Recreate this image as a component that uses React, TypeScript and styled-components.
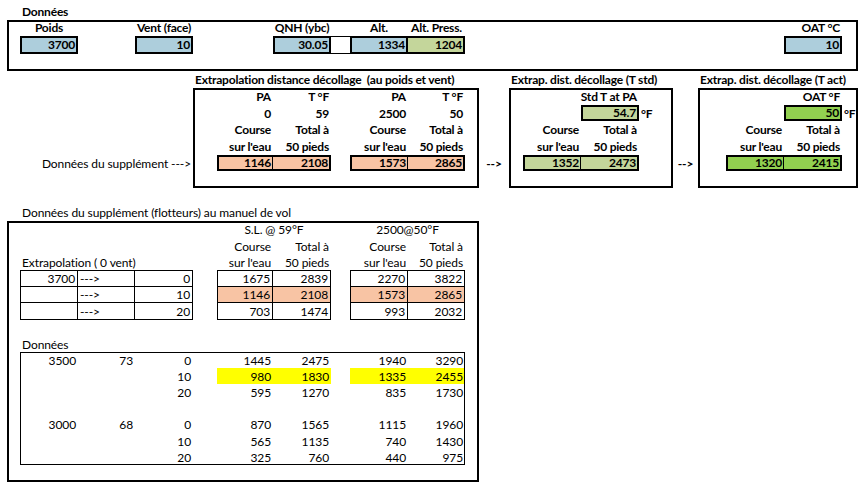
import React from "react";
import styled, { createGlobalStyle } from "styled-components";

const GlobalStyle = createGlobalStyle`
  html, body { margin: 0; padding: 0; background: #fff; }
  body { font-family: Lato, "Liberation Sans", sans-serif; color: #000; }
`;

// Excel-like column widths A..V and row heights 1..29
const COLS = [7, 13, 58, 57, 58, 24, 56, 58, 19, 58, 57, 14, 30, 14, 58, 58, 34, 25, 28, 58, 58, 16];
const ROWS = [16.5, 16.5, 18, 17, 17, 17, 16, 17, 17, 16, 17, 16, 17, 17, 16, 16, 17, 16, 17, 16, 16, 16, 16, 16, 16, 17, 16, 16, 17];

const col = (letter: string) => letter.charCodeAt(0) - 64;

const BLUE = "#adcedc";
const OLIVE = "#c4d69b";
const GREEN = "#92d050";
const SALMON = "#f8c4a4";
const YELLOW = "#ffff00";

type Align = "left" | "center" | "right";

const Sheet = styled.div`
  display: grid;
  grid-template-columns: ${COLS.map((c) => `${c}px`).join(" ")};
  grid-template-rows: ${ROWS.map((r) => `${r}px`).join(" ")};
  padding-top: 3px;
  width: 864px;
  height: 490px;
  box-sizing: border-box;
  font-size: 12px;
  line-height: 1;
`;

interface Place {
  $c: number;
  $r: number;
  $span?: number;
}

const Frame = styled.div<{ $c1: number; $c2: number; $r1: number; $r2: number; $thin?: boolean }>`
  grid-column: ${(p) => p.$c1} / ${(p) => p.$c2 + 1};
  grid-row: ${(p) => p.$r1} / ${(p) => p.$r2 + 1};
  border: ${(p) => (p.$thin ? "1px" : "2px")} solid #000;
  pointer-events: none;
  z-index: 2;
`;

const Cell = styled.div<Place & { $align?: Align; $bold?: boolean }>`
  grid-column: ${(p) => p.$c} / span ${(p) => p.$span ?? 1};
  grid-row: ${(p) => p.$r};
  display: flex;
  align-items: center;
  justify-content: ${(p) =>
    p.$align === "right" ? "flex-end" : p.$align === "center" ? "center" : "flex-start"};
  padding: 1px 2px 0;
  font-weight: ${(p) => (p.$bold ? 700 : 400)};
  letter-spacing: ${(p) => (p.$bold ? "-0.2px" : "-0.1px")};
  white-space: nowrap;
  min-width: 0;
`;

const Field = styled(Cell)<{ $fill: string; $pos?: "single" | "first" | "last" }>`
  background: ${(p) => p.$fill};
  border: 2px solid #000;
  border-right-width: ${(p) => (p.$pos === "first" ? "1px" : "2px")};
  border-left-width: ${(p) => (p.$pos === "last" ? "0" : "2px")};
  padding: 0 1px 0 2px;
  z-index: 1;
`;

const Spacer = styled.div<Place>`
  grid-column: ${(p) => p.$c} / span ${(p) => p.$span ?? 1};
  grid-row: ${(p) => p.$r};
  border-top: 1px solid #000;
  border-bottom: 1px solid #000;
`;

const TableCell = styled(Cell)<{ $fill?: string; $top?: boolean; $left?: boolean }>`
  background: ${(p) => p.$fill ?? "transparent"};
  border-right: 1px solid #000;
  border-bottom: 1px solid #000;
  border-top: ${(p) => (p.$top ? "1px solid #000" : "0")};
  border-left: ${(p) => (p.$left ? "1px solid #000" : "0")};
`;

const Highlight = styled.div<Place>`
  grid-column: ${(p) => p.$c} / span ${(p) => p.$span ?? 1};
  grid-row: ${(p) => p.$r};
  background: ${YELLOW};
`;

const pairs: { c: string; r: number; fill: string; a: string; b: string }[] = [
  { c: "G", r: 10, fill: SALMON, a: "1146", b: "2108" },
  { c: "J", r: 10, fill: SALMON, a: "1573", b: "2865" },
  { c: "O", r: 10, fill: OLIVE, a: "1352", b: "2473" },
  { c: "T", r: 10, fill: GREEN, a: "1320", b: "2415" },
];

const headRows: { r: number; cells: [string, string][] ; bold: boolean }[] = [
  { r: 6, bold: true, cells: [["G", "PA"], ["H", "T °F"], ["J", "PA"], ["K", "T °F"]] },
  { r: 7, bold: true, cells: [["G", "0"], ["H", "59"], ["J", "2500"], ["K", "50"]] },
  {
    r: 8,
    bold: true,
    cells: [["G", "Course"], ["H", "Total à"], ["J", "Course"], ["K", "Total à"], ["O", "Course"], ["P", "Total à"], ["T", "Course"], ["U", "Total à"]],
  },
  {
    r: 9,
    bold: true,
    cells: [["G", "sur l'eau"], ["H", "50 pieds"], ["J", "sur l'eau"], ["K", "50 pieds"], ["O", "sur l'eau"], ["P", "50 pieds"], ["T", "sur l'eau"], ["U", "50 pieds"]],
  },
  { r: 15, bold: false, cells: [["G", "Course"], ["H", "Total à"], ["J", "Course"], ["K", "Total à"]] },
  { r: 16, bold: false, cells: [["G", "sur l'eau"], ["H", "50 pieds"], ["J", "sur l'eau"], ["K", "50 pieds"]] },
];

const extrap = [
  { w: "3700", v: "0", sl: ["1675", "2839"], hi: ["2270", "3822"], fill: undefined as string | undefined },
  { w: "", v: "10", sl: ["1146", "2108"], hi: ["1573", "2865"], fill: SALMON },
  { w: "", v: "20", sl: ["703", "1474"], hi: ["993", "2032"], fill: undefined },
];

const data: { r: number; vals: string[] }[] = [
  { r: 22, vals: ["3500", "73", "0", "1445", "2475", "1940", "3290"] },
  { r: 23, vals: ["", "", "10", "980", "1830", "1335", "2455"] },
  { r: 24, vals: ["", "", "20", "595", "1270", "835", "1730"] },
  { r: 26, vals: ["3000", "68", "0", "870", "1565", "1115", "1960"] },
  { r: 27, vals: ["", "", "10", "565", "1135", "740", "1430"] },
  { r: 28, vals: ["", "", "20", "325", "760", "440", "975"] },
];
const dataCols = ["C", "D", "E", "G", "H", "J", "K"];

export default function App() {
  return (
    <>
      <GlobalStyle />
      <Sheet>
        {/* Frames */}
        <Frame $c1={col("B")} $c2={col("V")} $r1={2} $r2={4} />
        <Frame $c1={col("F")} $c2={col("L")} $r1={6} $r2={11} />
        <Frame $c1={col("N")} $c2={col("Q")} $r1={6} $r2={11} />
        <Frame $c1={col("S")} $c2={col("V")} $r1={6} $r2={11} />
        <Frame $c1={col("B")} $c2={col("L")} $r1={14} $r2={29} />
        <Frame $thin $c1={col("C")} $c2={col("K")} $r1={22} $r2={28} />

        {/* Section 1: Données */}
        <Cell $c={col("C")} $r={1} $span={2} $bold>Données</Cell>
        <Cell $c={col("C")} $r={2} $align="center" $bold>Poids</Cell>
        <Cell $c={col("E")} $r={2} $align="center" $bold>Vent (face)</Cell>
        <Cell $c={col("H")} $r={2} $align="center" $bold>QNH (ybc)</Cell>
        <Cell $c={col("J")} $r={2} $align="center" $bold>Alt.</Cell>
        <Cell $c={col("K")} $r={2} $align="center" $bold>Alt. Press.</Cell>
        <Cell $c={col("U")} $r={2} $align="right" $bold>OAT °C</Cell>

        <Field $c={col("C")} $r={3} $fill={BLUE} $align="right" $bold>3700</Field>
        <Field $c={col("E")} $r={3} $fill={BLUE} $align="right" $bold>10</Field>
        <Field $c={col("H")} $r={3} $fill={BLUE} $align="right" $bold>30.05</Field>
        <Spacer $c={col("I")} $r={3} />
        <Field $c={col("J")} $r={3} $fill={BLUE} $align="right" $bold>1334</Field>
        <Field $c={col("K")} $r={3} $fill={OLIVE} $pos="last" $align="right" $bold>1204</Field>
        <Field $c={col("U")} $r={3} $fill={BLUE} $align="right" $bold>10</Field>

        {/* Section 2-4: extrapolation */}
        <Cell $c={col("F")} $r={5} $span={7} $bold>Extrapolation distance décollage&nbsp; (au poids et vent)</Cell>
        <Cell $c={col("N")} $r={5} $span={5} $bold>Extrap. dist. décollage (T std)</Cell>
        <Cell $c={col("S")} $r={5} $span={4} $bold>Extrap. dist. décollage (T act)</Cell>

        {headRows.map((row) =>
          row.cells.map(([c, t]) => (
            <Cell key={`${row.r}${c}`} $c={col(c)} $r={row.r} $align="right" $bold={row.bold}>
              {t}
            </Cell>
          ))
        )}

        <Cell $c={col("O")} $r={6} $span={2} $align="right" $bold>Std T at PA</Cell>
        <Field $c={col("P")} $r={7} $fill={OLIVE} $align="right" $bold>54.7</Field>
        <Cell $c={col("Q")} $r={7} $bold>°F</Cell>
        <Cell $c={col("U")} $r={6} $align="right" $bold>OAT °F</Cell>
        <Field $c={col("U")} $r={7} $fill={GREEN} $align="right" $bold>50</Field>
        <Cell $c={col("V")} $r={7} $bold>°F</Cell>

        <Cell $c={col("B")} $r={10} $span={4} $align="right">Données du supplément ---&gt;</Cell>
        {pairs.map((p) => (
          <React.Fragment key={p.c}>
            <Field $c={col(p.c)} $r={p.r} $fill={p.fill} $pos="first" $align="right" $bold>{p.a}</Field>
            <Field $c={col(p.c) + 1} $r={p.r} $fill={p.fill} $pos="last" $align="right" $bold>{p.b}</Field>
          </React.Fragment>
        ))}
        <Cell $c={col("M")} $r={10} $align="center" $bold>--&gt;</Cell>
        <Cell $c={col("R")} $r={10} $align="center" $bold>--&gt;</Cell>

        {/* Section 5: supplément */}
        <Cell $c={col("C")} $r={13} $span={9}>Données du supplément (flotteurs) au manuel de vol</Cell>
        <Cell $c={col("G")} $r={14} $span={2} $align="center">S.L. @ 59°F</Cell>
        <Cell $c={col("J")} $r={14} $span={2} $align="center">2500@50°F</Cell>
        <Cell $c={col("C")} $r={16} $span={3}>Extrapolation ( 0 vent)</Cell>

        {extrap.map((e, i) => {
          const r = 17 + i;
          const top = i === 0;
          return (
            <React.Fragment key={r}>
              <TableCell $c={col("C")} $r={r} $top={top} $left $align="right">{e.w}</TableCell>
              <TableCell $c={col("D")} $r={r} $top={top}>---&gt;</TableCell>
              <TableCell $c={col("E")} $r={r} $top={top} $align="right">{e.v}</TableCell>
              <TableCell $c={col("G")} $r={r} $top={top} $left $fill={e.fill} $align="right">{e.sl[0]}</TableCell>
              <TableCell $c={col("H")} $r={r} $top={top} $fill={e.fill} $align="right">{e.sl[1]}</TableCell>
              <TableCell $c={col("J")} $r={r} $top={top} $left $fill={e.fill} $align="right">{e.hi[0]}</TableCell>
              <TableCell $c={col("K")} $r={r} $top={top} $fill={e.fill} $align="right">{e.hi[1]}</TableCell>
            </React.Fragment>
          );
        })}

        <Cell $c={col("C")} $r={21} $span={2}>Données</Cell>
        <Highlight $c={col("G")} $r={23} $span={2} />
        <Highlight $c={col("J")} $r={23} $span={2} />
        {data.map((d) =>
          d.vals.map((v, i) => (
            <Cell key={`${d.r}-${i}`} $c={col(dataCols[i])} $r={d.r} $align="right">
              {v}
            </Cell>
          ))
        )}
      </Sheet>
    </>
  );
}
